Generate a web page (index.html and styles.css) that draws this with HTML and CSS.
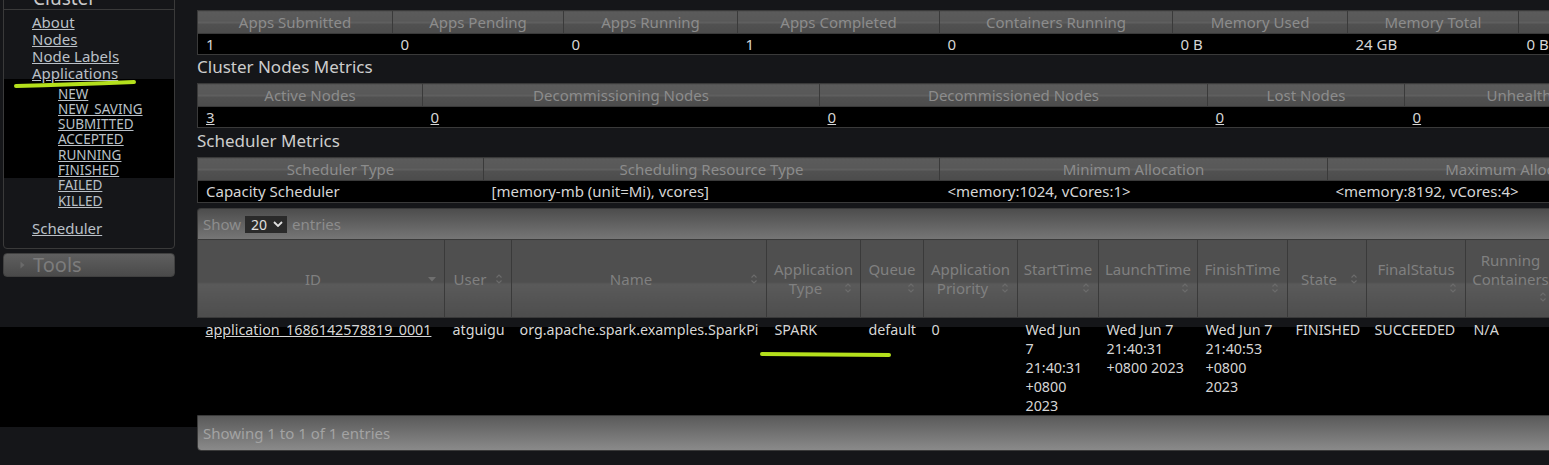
FILE: index.html
```html
<!DOCTYPE html>
<html lang="en">
<head>
<meta charset="utf-8">
<title>All Applications</title>
<link rel="stylesheet" href="styles.css">
</head>
<body>
<div class="page">
  <aside class="side">
    <nav class="nav-box">
      <div class="nav-head">Cluster</div>
      <ul class="nav-list">
        <li><a href="#">About</a></li>
        <li><a href="#">Nodes</a></li>
        <li><a href="#">Node Labels</a></li>
        <li><a href="#">Applications</a>
          <ul class="nav-sub">
            <li><a href="#">NEW</a></li>
            <li><a href="#">NEW_SAVING</a></li>
            <li><a href="#">SUBMITTED</a></li>
            <li><a href="#">ACCEPTED</a></li>
            <li><a href="#">RUNNING</a></li>
            <li><a href="#">FINISHED</a></li>
            <li><a href="#">FAILED</a></li>
            <li><a href="#">KILLED</a></li>
          </ul>
        </li>
        <li class="sched"><a href="#">Scheduler</a></li>
      </ul>
    </nav>
    <div class="tools">
      <svg class="tri" width="5" height="8" viewBox="0 0 5 8"><path d="M0.5 0.5 L4.5 4 L0.5 7.5 Z" fill="#6a6a6a"/></svg>
      <span>Tools</span>
    </div>
  </aside>

  <main class="main">
    <table class="metrics m1">
      <colgroup><col><col><col><col><col><col><col><col><col><col><col></colgroup>
      <thead>
        <tr><th>Apps Submitted</th><th>Apps Pending</th><th>Apps Running</th><th>Apps Completed</th><th>Containers Running</th><th>Memory Used</th><th>Memory Total</th><th>Memory Reserved</th><th>VCores Used</th><th>VCores Total</th><th>VCores Reserved</th></tr>
      </thead>
      <tbody>
        <tr><td>1</td><td>0</td><td>0</td><td>1</td><td>0</td><td>0 B</td><td>24 GB</td><td>0 B</td><td>0</td><td>24</td><td>0</td></tr>
      </tbody>
    </table>

    <h3 class="sec sec1">Cluster Nodes Metrics</h3>
    <table class="metrics m2">
      <colgroup><col><col><col><col><col><col><col></colgroup>
      <thead>
        <tr><th>Active Nodes</th><th>Decommissioning Nodes</th><th>Decommissioned Nodes</th><th>Lost Nodes</th><th>Unhealthy Nodes</th><th>Rebooted Nodes</th><th>Shutdown Nodes</th></tr>
      </thead>
      <tbody>
        <tr><td><a href="#">3</a></td><td><a href="#">0</a></td><td><a href="#">0</a></td><td><a href="#">0</a></td><td><a href="#">0</a></td><td><a href="#">0</a></td><td><a href="#">0</a></td></tr>
      </tbody>
    </table>

    <h3 class="sec sec2">Scheduler Metrics</h3>
    <table class="metrics m3">
      <colgroup><col><col><col><col><col></colgroup>
      <thead>
        <tr><th>Scheduler Type</th><th>Scheduling Resource Type</th><th>Minimum Allocation</th><th>Maximum Allocation</th><th>Maximum Cluster Application Priority</th></tr>
      </thead>
      <tbody>
        <tr><td>Capacity Scheduler</td><td>[memory-mb (unit=Mi), vcores]</td><td>&lt;memory:1024, vCores:1&gt;</td><td>&lt;memory:8192, vCores:4&gt;</td><td>0</td></tr>
      </tbody>
    </table>

    <div class="apps">
      <div class="toolbar">
        <span>Show</span>
        <span class="sel">20<svg width="10" height="6" viewBox="0 0 10 6"><path d="M1 1 L5 5 L9 1" fill="none" stroke="#e0e0e0" stroke-width="1.8"/></svg></span>
        <span>entries</span>
      </div>
      <table class="apps-table">
        <colgroup><col><col><col><col><col><col><col><col><col><col><col><col><col><col></colgroup>
        <thead>
          <tr>
            <th>ID<span class="sort"><svg width="16" height="16" viewBox="0 0 16 16"><path d="M4 6 L12 6 L8 10.5 Z" fill="#6f6f6f"/></svg></span></th>
            <th>User<span class="sort"><svg width="16" height="16" viewBox="0 0 16 16"><path d="M5.5 6.5 L8 4 L10.5 6.5 M5.5 9.5 L8 12 L10.5 9.5" fill="none" stroke="#6c6c6c" stroke-width="1.1"/></svg></span></th>
            <th>Name<span class="sort"><svg width="16" height="16" viewBox="0 0 16 16"><path d="M5.5 6.5 L8 4 L10.5 6.5 M5.5 9.5 L8 12 L10.5 9.5" fill="none" stroke="#6c6c6c" stroke-width="1.1"/></svg></span></th>
            <th>Application Type<span class="sort"><svg width="16" height="16" viewBox="0 0 16 16"><path d="M5.5 6.5 L8 4 L10.5 6.5 M5.5 9.5 L8 12 L10.5 9.5" fill="none" stroke="#6c6c6c" stroke-width="1.1"/></svg></span></th>
            <th>Queue<span class="sort"><svg width="16" height="16" viewBox="0 0 16 16"><path d="M5.5 6.5 L8 4 L10.5 6.5 M5.5 9.5 L8 12 L10.5 9.5" fill="none" stroke="#6c6c6c" stroke-width="1.1"/></svg></span></th>
            <th>Application Priority<span class="sort"><svg width="16" height="16" viewBox="0 0 16 16"><path d="M5.5 6.5 L8 4 L10.5 6.5 M5.5 9.5 L8 12 L10.5 9.5" fill="none" stroke="#6c6c6c" stroke-width="1.1"/></svg></span></th>
            <th>StartTime<span class="sort"><svg width="16" height="16" viewBox="0 0 16 16"><path d="M5.5 6.5 L8 4 L10.5 6.5 M5.5 9.5 L8 12 L10.5 9.5" fill="none" stroke="#6c6c6c" stroke-width="1.1"/></svg></span></th>
            <th>LaunchTime<span class="sort"><svg width="16" height="16" viewBox="0 0 16 16"><path d="M5.5 6.5 L8 4 L10.5 6.5 M5.5 9.5 L8 12 L10.5 9.5" fill="none" stroke="#6c6c6c" stroke-width="1.1"/></svg></span></th>
            <th>FinishTime<span class="sort"><svg width="16" height="16" viewBox="0 0 16 16"><path d="M5.5 6.5 L8 4 L10.5 6.5 M5.5 9.5 L8 12 L10.5 9.5" fill="none" stroke="#6c6c6c" stroke-width="1.1"/></svg></span></th>
            <th>State<span class="sort"><svg width="16" height="16" viewBox="0 0 16 16"><path d="M5.5 6.5 L8 4 L10.5 6.5 M5.5 9.5 L8 12 L10.5 9.5" fill="none" stroke="#6c6c6c" stroke-width="1.1"/></svg></span></th>
            <th>FinalStatus<span class="sort"><svg width="16" height="16" viewBox="0 0 16 16"><path d="M5.5 6.5 L8 4 L10.5 6.5 M5.5 9.5 L8 12 L10.5 9.5" fill="none" stroke="#6c6c6c" stroke-width="1.1"/></svg></span></th>
            <th>Running Containers<span class="sort"><svg width="16" height="16" viewBox="0 0 16 16"><path d="M5.5 6.5 L8 4 L10.5 6.5 M5.5 9.5 L8 12 L10.5 9.5" fill="none" stroke="#6c6c6c" stroke-width="1.1"/></svg></span></th>
            <th>Allocated CPU VCores<span class="sort"><svg width="16" height="16" viewBox="0 0 16 16"><path d="M5.5 6.5 L8 4 L10.5 6.5 M5.5 9.5 L8 12 L10.5 9.5" fill="none" stroke="#6c6c6c" stroke-width="1.1"/></svg></span></th>
            <th>Allocated Memory MB<span class="sort"><svg width="16" height="16" viewBox="0 0 16 16"><path d="M5.5 6.5 L8 4 L10.5 6.5 M5.5 9.5 L8 12 L10.5 9.5" fill="none" stroke="#6c6c6c" stroke-width="1.1"/></svg></span></th>
          </tr>
        </thead>
        <tbody>
          <tr>
            <td><a href="#">application_1686142578819_0001</a></td>
            <td>atguigu</td>
            <td>org.apache.spark.examples.SparkPi</td>
            <td>SPARK</td>
            <td>default</td>
            <td>0</td>
            <td>Wed Jun 7 21:40:31 +0800 2023</td>
            <td>Wed Jun 7 21:40:31 +0800 2023</td>
            <td>Wed Jun 7 21:40:53 +0800 2023</td>
            <td>FINISHED</td>
            <td>SUCCEEDED</td>
            <td>N/A</td>
            <td>N/A</td>
            <td>N/A</td>
          </tr>
        </tbody>
      </table>
      <div class="footer">Showing 1 to 1 of 1 entries</div>
    </div>
  </main>
</div>

<svg class="marks" width="1549" height="465" viewBox="0 0 1549 465">
  <path d="M16 86 Q 70 84.5 134 82" fill="none" stroke="#b4e01c" stroke-width="4" stroke-linecap="round"/>
  <path d="M762 354 L889 355" fill="none" stroke="#b4e01c" stroke-width="4" stroke-linecap="round"/>
</svg>
</body>
</html>
```

FILE: styles.css
```css
html {
  height: 100%;
  overflow: hidden;
  background: linear-gradient(to bottom, #151619 0, #151619 327px, #000 327px, #000 427px, #151619 427px);
}

body {
  margin: 0;
  height: 100%;
  overflow: hidden;
  font-family: "Noto Sans", "Open Sans", sans-serif;
  color: #d4d4d4;
}

a {
  color: inherit;
  text-decoration: underline;
}

.page {
  display: flex;
  align-items: flex-start;
  width: 2600px;
}

/* ---------- side navigation ---------- */
.side {
  flex: none;
  width: 172px;
  margin: -14px 0 0 3px;
}

.nav-box {
  border: 1px solid #3a3a3a;
  border-radius: 4px;
  padding-bottom: 10px;
  background: linear-gradient(to bottom, #151619 0, #151619 92px, #000 92px, #000 191px, #151619 191px);
}

.nav-head {
  font-size: 19px;
  line-height: 22px;
  padding-left: 29px;
  color: #c9c9c9;
  border-bottom: 1px solid #3a3a3a;
}

.nav-list {
  list-style: none;
  margin: 0;
  padding: 3.5px 0 0 28px;
  font-size: 15px;
  line-height: 17.33px;
  color: #bac0c7;
}

.nav-sub {
  list-style: none;
  margin: 3.7px 0 0 26px;
  padding: 0;
  font-size: 13.5px;
  line-height: 15.3px;
}

.sched {
  margin-top: 11.4px;
}

.tools {
  margin-top: 4px;
  height: 22px;
  border: 1px solid #404040;
  border-radius: 4px;
  background: linear-gradient(to bottom, #5f5f5f, #4a4a4a);
  display: flex;
  align-items: center;
  font-size: 20px;
  line-height: 22px;
  color: #7c7c7c;
}

.tri {
  margin-left: 16px;
  margin-right: 8px;
}

/* ---------- main column ---------- */
.main {
  flex: none;
  margin-left: 22px;
  padding-top: 10px;
}

.sec {
  font-size: 17px;
  font-weight: normal;
  line-height: 22px;
  color: #cdcdcd;
}

.sec1 {
  margin: 1px 0 5px;
}

.sec2 {
  margin: 2px 0 5px;
}

.metrics {
  border-collapse: collapse;
  table-layout: fixed;
  border: 1px solid #3a3a3a;
  font-size: 15px;
}

.metrics th {
  font-weight: normal;
  color: #8c8c8c;
  line-height: 22px;
  padding: 0 4px;
  border: 1px solid #3a3a3a;
  white-space: nowrap;
  overflow: hidden;
  text-align: center;
  background: linear-gradient(to bottom, #5b5b5b 0%, #585858 46%, #676767 50%, #515151 56%, #4c4c4c 100%);
}

.metrics td {
  background: #000;
  line-height: 20px;
  padding: 0 8px;
  white-space: nowrap;
  overflow: hidden;
  color: #d6d6d6;
}

.m3 td {
  line-height: 21px;
}

.m1 { width: 2051px; }
.m1 col:nth-child(1) { width: 195px; }
.m1 col:nth-child(2) { width: 171px; }
.m1 col:nth-child(3) { width: 174px; }
.m1 col:nth-child(4) { width: 202px; }
.m1 col:nth-child(5) { width: 233px; }
.m1 col:nth-child(6) { width: 175px; }
.m1 col:nth-child(7) { width: 171px; }
.m1 col:nth-child(8) { width: 220px; }
.m1 col:nth-child(9) { width: 170px; }
.m1 col:nth-child(10) { width: 170px; }
.m1 col:nth-child(11) { width: 170px; }

.m2 { width: 1887px; }
.m2 col:nth-child(1) { width: 225px; }
.m2 col:nth-child(2) { width: 397px; }
.m2 col:nth-child(3) { width: 388px; }
.m2 col:nth-child(4) { width: 197px; }
.m2 col:nth-child(5) { width: 286px; }
.m2 col:nth-child(6) { width: 197px; }
.m2 col:nth-child(7) { width: 197px; }

.m3 { width: 1810px; }
.m3 col:nth-child(1) { width: 286px; }
.m3 col:nth-child(2) { width: 456px; }
.m3 col:nth-child(3) { width: 388px; }
.m3 col:nth-child(4) { width: 380px; }
.m3 col:nth-child(5) { width: 300px; }

/* ---------- applications table ---------- */
.apps {
  margin-top: 5px;
  width: 1598px;
}

.toolbar {
  height: 31px;
  box-sizing: border-box;
  border: 1px solid #3a3a3a;
  border-bottom: none;
  border-radius: 4px 0 0 0;
  padding-left: 5px;
  display: flex;
  align-items: center;
  gap: 4px;
  font-size: 15px;
  color: #8d8d8d;
  background: linear-gradient(to bottom, #4d4d4d, #767676);
}

.sel {
  width: 42px;
  height: 17px;
  box-sizing: border-box;
  background: #2a2a2a;
  color: #e0e0e0;
  font-size: 14px;
  line-height: 17px;
  padding: 0 4px 0 6px;
  margin-right: 1px;
  display: inline-flex;
  align-items: center;
  justify-content: space-between;
}

.apps-table {
  width: 1598px;
  border-collapse: collapse;
  table-layout: fixed;
  font-size: 15px;
}

.apps-table col:nth-child(1) { width: 247px; }
.apps-table col:nth-child(2) { width: 67px; }
.apps-table col:nth-child(3) { width: 255px; }
.apps-table col:nth-child(4) { width: 94px; }
.apps-table col:nth-child(5) { width: 63px; }
.apps-table col:nth-child(6) { width: 94px; }
.apps-table col:nth-child(7) { width: 81px; }
.apps-table col:nth-child(8) { width: 99px; }
.apps-table col:nth-child(9) { width: 90px; }
.apps-table col:nth-child(10) { width: 79px; }
.apps-table col:nth-child(11) { width: 99px; }
.apps-table col:nth-child(12) { width: 90px; }
.apps-table col:nth-child(13) { width: 120px; }
.apps-table col:nth-child(14) { width: 120px; }

.apps-table th {
  font-weight: normal;
  color: #808080;
  line-height: 18.5px;
  padding: 11px 4px 10.5px;
  border: 1px solid #3a3a3a;
  text-align: center;
  vertical-align: middle;
  background: linear-gradient(to bottom, #4f4f4f 0%, #4f4f4f 54%, #5a5a5a 57%, #4d4d4d 100%);
}

.sort {
  float: right;
  width: 16px;
  height: 18.5px;
  display: flex;
  align-items: center;
}

.apps-table td {
  padding: 2px 8px 0 8px;
  font-size: 14.3px;
  line-height: 19px;
  vertical-align: top;
  color: #d6d6d6;
}

.footer {
  height: 36px;
  box-sizing: border-box;
  border: 1px solid #3a3a3a;
  border-radius: 0 0 0 4px;
  padding-left: 5px;
  display: flex;
  align-items: center;
  font-size: 15px;
  color: #a3a3a3;
  background: linear-gradient(to bottom, #5a5a5a, #8a8a8a);
}

/* annotation marks drawn over the page */
.marks {
  position: absolute;
  top: 0;
  left: 0;
  pointer-events: none;
}
```
